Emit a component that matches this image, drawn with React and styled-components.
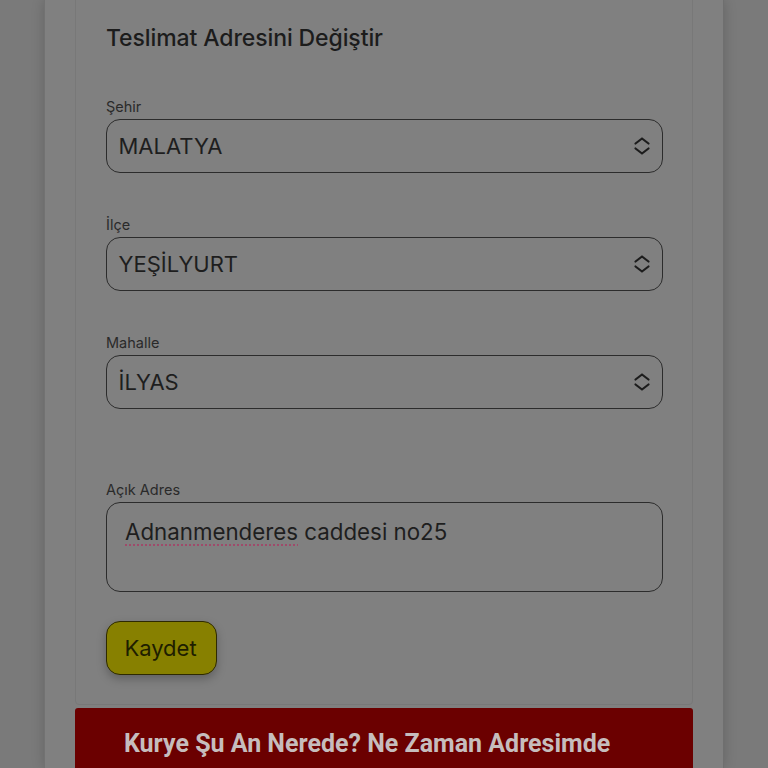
import styled, { createGlobalStyle } from 'styled-components'

const GlobalStyle = createGlobalStyle`
  *, *::before, *::after {
    box-sizing: border-box;
  }
  html, body {
    margin: 0;
    background: #7a7a7a;
    font-family: Inter, 'Noto Sans', sans-serif;
    overflow: hidden;
  }
`

const Page = styled.div`
  height: 768px;
  display: flex;
  justify-content: center;
`

const Panel = styled.main`
  width: 680px;
  background: #808080;
  border-left: 1px solid #727272;
  border-right: 1px solid #6f6f6f;
  box-shadow: 0 0 12px rgba(0, 0, 0, 0.18);
  padding: 0 30px;
  display: flex;
  flex-direction: column;
  gap: 3px;
`

const Card = styled.section`
  margin-top: -20px;
  border: 1px solid #787878;
  border-radius: 4px;
  padding: 42px 29px 29px 30px;
  display: flex;
  flex-direction: column;
`

const Title = styled.h2`
  margin: 0 0 46px;
  font-size: 23px;
  font-weight: 500;
  line-height: 30px;
  color: #1c1c1c;
  letter-spacing: -0.1px;
`

const Field = styled.div`
  display: flex;
  flex-direction: column;
  margin-bottom: ${(p) => p.$gap ?? 44}px;
`

const Label = styled.label`
  font-size: 14.5px;
  color: #2a2a2a;
  margin-bottom: 5px;
  line-height: 15px;
`

const SelectBox = styled.div`
  height: 54px;
  border: 1.5px solid #2c2c2c;
  border-radius: 14px;
  display: flex;
  align-items: center;
  justify-content: space-between;
  padding: 0 11px 0 11.5px;
  font-size: 22px;
  color: #1e1e1e;
`

const AddressBox = styled.div`
  height: 90px;
  border: 1.5px solid #2c2c2c;
  border-radius: 14px;
  padding: 15px 18px;
  font-size: 22.3px;
  color: #1e1e1e;
`

const Misspelled = styled.span`
  text-decoration: underline dotted #a04a6a;
  text-decoration-thickness: 2px;
  text-underline-offset: 4px;
`

const SaveButton = styled.button`
  align-self: flex-start;
  margin-top: 29px;
  width: 111px;
  height: 54px;
  border: 1.5px solid #2e2a00;
  border-radius: 14px;
  background: #878000;
  box-shadow: 0 4px 10px rgba(0, 0, 0, 0.25);
  font-family: Inter, 'Noto Sans', sans-serif;
  font-size: 22px;
  color: #1e1e00;
  padding: 0 2px 0 0;
`

const TrackBanner = styled.div`
  background: #6b0000;
  border-radius: 3px 3px 0 0;
  flex: 1;
  padding: 21px 10px 20px 49px;
  font-family: Roboto, 'Noto Sans', sans-serif;
  font-weight: 700;
  font-size: 25px;
  color: #c6bdbd;
  white-space: nowrap;
`

function Chevrons() {
  return (
    <svg width="18" height="20" viewBox="0 0 18 20" fill="none" stroke="#1c1c1c" strokeWidth="2.2" strokeLinecap="round" strokeLinejoin="round">
      <path d="M2.5 7.5 L9 2.5 L15.5 7.5" />
      <path d="M2.5 12.5 L9 17.5 L15.5 12.5" />
    </svg>
  )
}

const selects = [
  { label: 'Şehir', value: 'MALATYA' },
  { label: 'İlçe', value: 'YEŞİLYURT' },
  { label: 'Mahalle', value: 'İLYAS' },
]

export default function App() {
  return (
    <>
      <GlobalStyle />
      <Page>
        <Panel>
          <Card>
            <Title>Teslimat Adresini Değiştir</Title>
            {selects.map((s, i) => (
              <Field key={s.label} $gap={i === 2 ? 73 : 44}>
                <Label>{s.label}</Label>
                <SelectBox>
                  <span>{s.value}</span>
                  <Chevrons />
                </SelectBox>
              </Field>
            ))}
            <Field $gap={0}>
              <Label>Açık Adres</Label>
              <AddressBox>
                <Misspelled>Adnanmenderes</Misspelled> caddesi no25
              </AddressBox>
            </Field>
            <SaveButton>Kaydet</SaveButton>
          </Card>
          <TrackBanner>Kurye Şu An Nerede? Ne Zaman Adresimde</TrackBanner>
        </Panel>
      </Page>
    </>
  )
}
